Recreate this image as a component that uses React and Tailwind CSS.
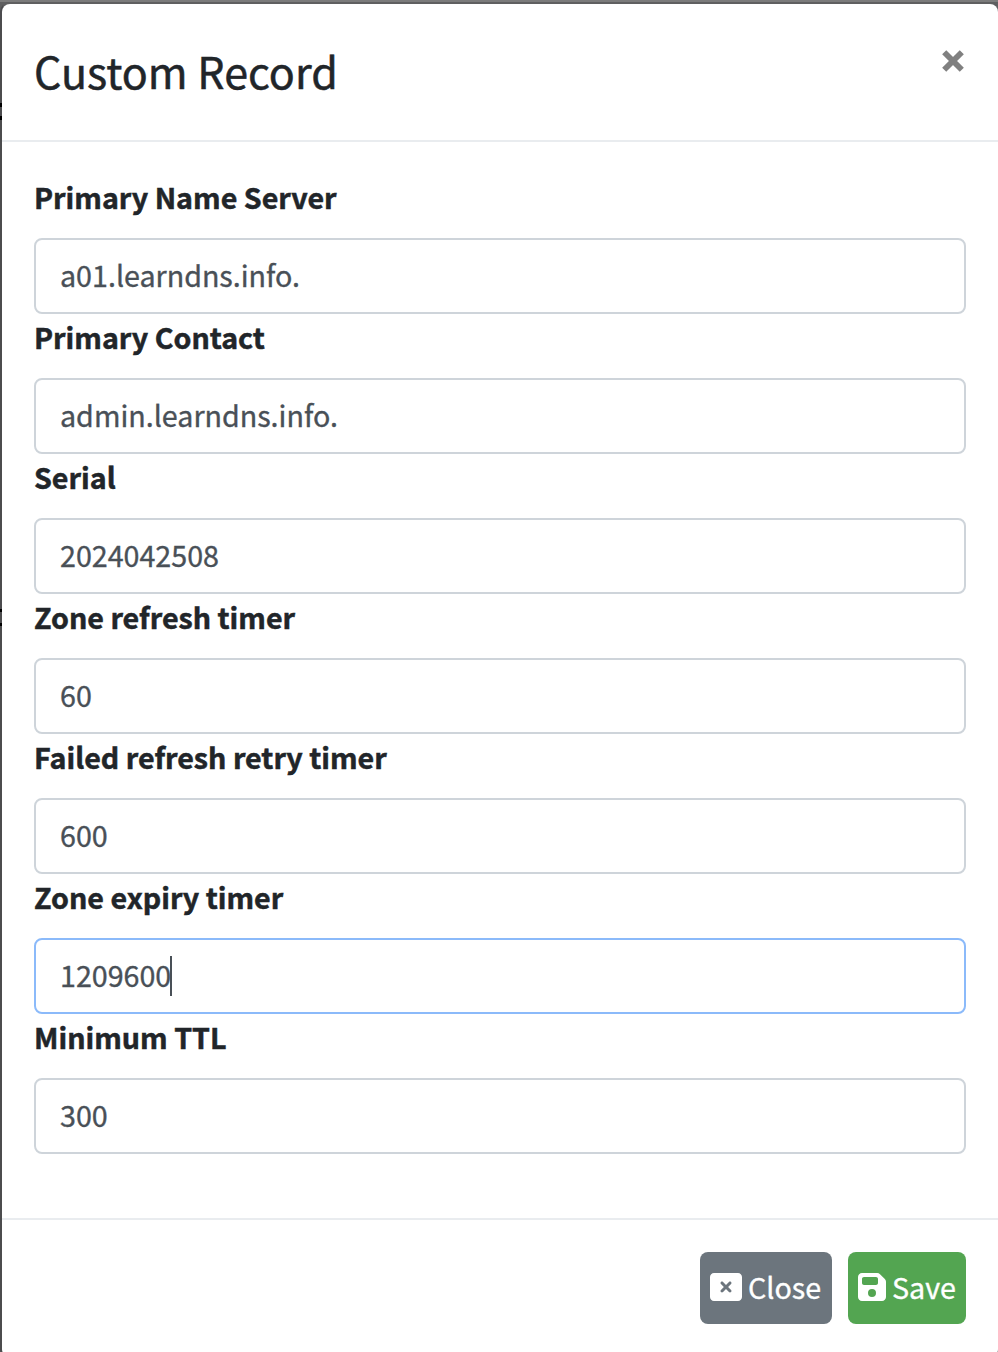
import { FaFloppyDisk, FaRectangleXmark } from 'react-icons/fa6'

const fields = [
  { id: 'mname', label: 'Primary Name Server', value: 'a01.learndns.info.' },
  { id: 'rname', label: 'Primary Contact', value: 'admin.learndns.info.' },
  { id: 'serial', label: 'Serial', value: '2024042508' },
  { id: 'refresh', label: 'Zone refresh timer', value: '60' },
  { id: 'retry', label: 'Failed refresh retry timer', value: '600' },
  { id: 'expire', label: 'Zone expiry timer', value: '1209600', active: true },
  { id: 'minimum', label: 'Minimum TTL', value: '300' },
]

function Field({ label, value, active }) {
  return (
    <div className="flex flex-col">
      <span className="h-16 pt-[7px] text-[28.65px] leading-[32px] font-bold text-[#212529] [-webkit-text-stroke:0.5px]">
        {label}
      </span>
      <div
        className={`flex h-19 items-center rounded-lg border-2 bg-white px-6 ${
          active ? 'border-[#8bbafa]' : 'border-[#ced4da]'
        }`}
      >
        <span className="pb-0.5 text-[28.65px] leading-[48px] text-[#495057] [-webkit-text-stroke:0.35px]">
          {value}
        </span>
        {active && <span className="-ml-px h-10 w-0.5 bg-[#495057]" />}
      </div>
    </div>
  )
}

export default function App() {
  return (
    <div className="relative h-[1352px] w-[998px] overflow-hidden bg-[#5f5f60] font-['Noto_Sans_CJK_SC','Source_Sans_Pro',sans-serif]">
      <div className="h-0.5 bg-[#7b7b7b]" />
      <div className="h-[1357px] w-[1000px] rounded-[10px] border-2 border-[#5f5f60] border-l-[#4c4c4e] bg-white">
        <header className="flex h-[138px] items-start justify-between border-b-2 border-[#e9ecef] pt-[30px] pr-[33px] pl-8">
          <h4 className="text-[43px] leading-[72px] text-[#212529] [-webkit-text-stroke:0.5px]">Custom Record</h4>
          <button type="button" aria-label="Close" className="mt-[15px] text-[#808080]">
            <svg width="24" height="24" viewBox="0 0 24 24" stroke="currentColor" strokeWidth="5.8">
              <path d="M3.2 3.2L20.8 20.8M20.8 3.2L3.2 20.8" />
            </svg>
          </button>
        </header>

        <div className="flex h-[1078px] flex-col border-b-2 border-[#e9ecef] px-8 pt-8">
          {fields.map((f) => (
            <Field key={f.id} {...f} />
          ))}
        </div>

        <footer className="flex justify-end gap-4 pt-8 pr-8">
          <button
            type="button"
            className="flex h-18 w-33 items-center rounded-lg bg-[#6c757d] pb-0.5 pl-[10px] text-[28.65px] leading-[48px] text-white [-webkit-text-stroke:0.35px]"
          >
            <FaRectangleXmark className="mr-1.5 size-8" />
            Close
          </button>
          <button
            type="button"
            className="flex h-18 w-[118px] items-center rounded-lg bg-[#53a551] pb-0.5 pl-[10px] text-[28.65px] leading-[48px] text-white [-webkit-text-stroke:0.35px]"
          >
            <FaFloppyDisk className="mr-1.5 h-8 w-7" />
            Save
          </button>
        </footer>
      </div>

      {/* edges of the page text that show behind the dialog */}
      <div className="absolute top-[103px] left-0 h-1 w-0.5 bg-black" />
      <div className="absolute top-[116px] left-0 h-1 w-0.5 bg-black" />
      <div className="absolute top-[609px] left-0 h-[3px] w-0.5 bg-black" />
      <div className="absolute top-[623px] left-0 h-[3px] w-0.5 bg-black" />
    </div>
  )
}
